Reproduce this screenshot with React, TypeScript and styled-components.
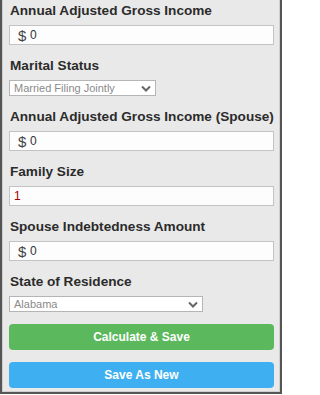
import React from "react";
import styled, { createGlobalStyle } from "styled-components";

const GlobalStyle = createGlobalStyle`
  html, body {
    margin: 0;
    padding: 0;
    background: #ffffff;
  }
  body {
    font-family: "Liberation Sans", Arial, sans-serif;
  }
`;

const Chevron: React.FC = () => (
  <ChevronSvg viewBox="0 0 10 7" width="10" height="7">
    <polyline points="1,1.5 5,5.5 9,1.5" fill="none" stroke="#666" strokeWidth="2" />
  </ChevronSvg>
);

const MoneyInput: React.FC<{ value: string }> = ({ value }) => (
  <InputBox>
    <Addon>$</Addon>
    <Value>{value}</Value>
  </InputBox>
);

const App: React.FC = () => {
  return (
    <>
      <GlobalStyle />
      <Frame>
        <Panel>
          <Field>
            <Label>Annual Adjusted Gross Income</Label>
            <MoneyInput value="0" />
          </Field>
          <Field>
            <Label>Marital Status</Label>
            <Select width={147}>
              <SelectText>Married Filing Jointly</SelectText>
              <Chevron />
            </Select>
          </Field>
          <Field>
            <Label>Annual Adjusted Gross Income (Spouse)</Label>
            <MoneyInput value="0" />
          </Field>
          <Field>
            <Label>Family Size</Label>
            <InputBox>
              <PlainValue>1</PlainValue>
            </InputBox>
          </Field>
          <Field>
            <Label>Spouse Indebtedness Amount</Label>
            <MoneyInput value="0" />
          </Field>
          <Field>
            <Label>State of Residence</Label>
            <Select width={194}>
              <SelectText>Alabama</SelectText>
              <Chevron />
            </Select>
          </Field>
          <Buttons>
            <Button color="#5cb85c">Calculate &amp; Save</Button>
            <Button color="#3eaff0">Save As New</Button>
          </Buttons>
        </Panel>
      </Frame>
    </>
  );
};

export default App;

const Frame = styled.div`
  width: 278px;
  height: 392px;
  border: 2px solid #555555;
  border-top: none;
`;

const Panel = styled.div`
  box-sizing: border-box;
  height: 100%;
  border: 1px solid #cfcfcf;
  border-top: none;
  background: #e9e9e9;
  padding: 3px 5px 0 6px;
  display: flex;
  flex-direction: column;
`;

const Field = styled.div`
  display: flex;
  flex-direction: column;
  align-items: flex-start;
  margin-bottom: 13px;
`;

const Label = styled.div`
  font-size: 13.6px;
  line-height: 16px;
  font-weight: bold;
  color: #2b2b2b;
  margin-bottom: 6px;
  margin-left: 1px;
  white-space: nowrap;
`;

const InputBox = styled.div`
  box-sizing: border-box;
  width: 100%;
  height: 20px;
  border: 1px solid #c3c3c3;
  background: #fdfdfd;
  display: flex;
  align-items: center;
`;

const Addon = styled.span`
  font-size: 15px;
  color: #444444;
  margin-left: 8px;
  width: 12px;
`;

const Value = styled.span`
  font-size: 12px;
  color: #333333;
`;

const PlainValue = styled.span`
  font-size: 12px;
  color: #a30000;
  margin-left: 4px;
`;

const Select = styled.div<{ width: number }>`
  box-sizing: border-box;
  width: ${(p) => p.width}px;
  height: 16px;
  border: 1px solid #b5b5b5;
  background: #ffffff;
  display: flex;
  align-items: center;
  justify-content: space-between;
  padding: 0 4px 0 4px;
`;

const SelectText = styled.span`
  font-size: 11px;
  color: #8a8a8a;
  white-space: nowrap;
`;

const ChevronSvg = styled.svg`
  display: block;
`;

const Buttons = styled.div`
  display: flex;
  flex-direction: column;
  gap: 12px;
  margin-top: -1px;
`;

const Button = styled.div<{ color: string }>`
  height: 26px;
  border-radius: 4px;
  background: ${(p) => p.color};
  color: #ffffff;
  font-size: 12px;
  font-weight: bold;
  display: flex;
  align-items: center;
  justify-content: center;
`;
